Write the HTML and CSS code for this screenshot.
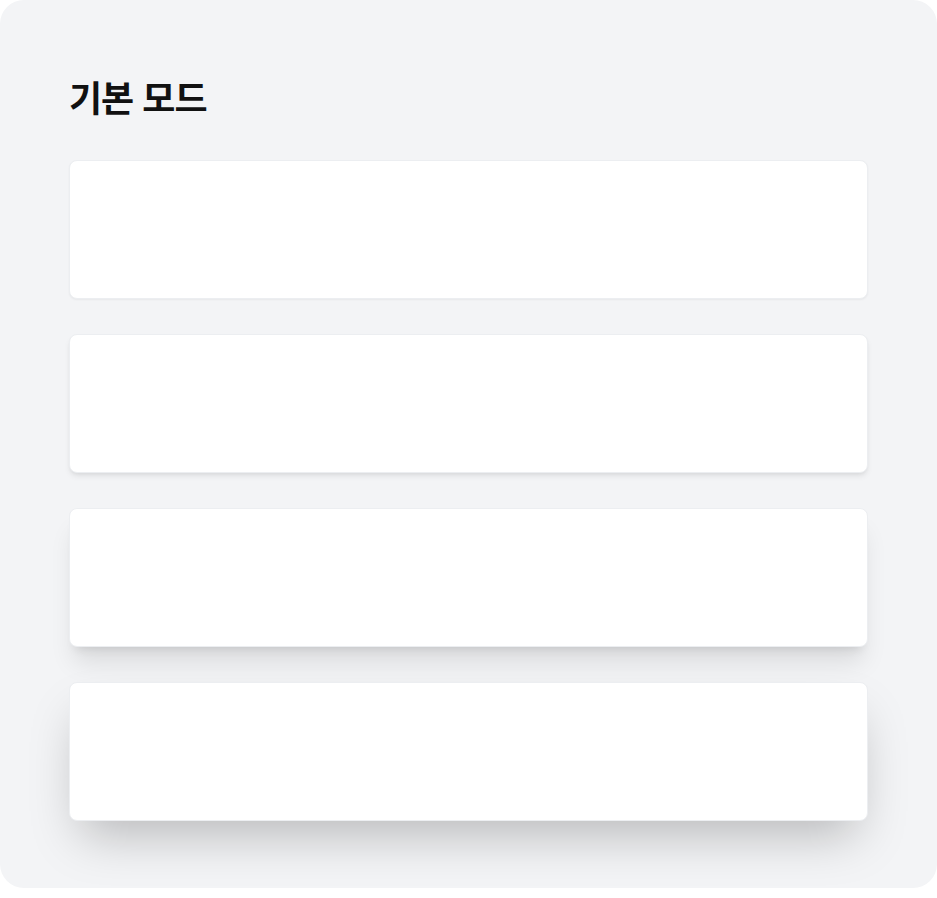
FILE: index.html
```html
<!DOCTYPE html>
<html lang="ko">
<head>
<meta charset="utf-8">
<title>기본 모드</title>
<link rel="stylesheet" href="styles.css">
</head>
<body>
<main class="panel">
  <h1 class="title">기본 모드</h1>
  <div class="cards">
    <div class="card card-sm"></div>
    <div class="card card-md"></div>
    <div class="card card-lg"></div>
    <div class="card card-xl"></div>
  </div>
</main>
</body>
</html>
```

FILE: styles.css
```css
html, body {
  margin: 0;
  padding: 0;
  background: #ffffff;
}

body {
  font-family: "Noto Sans CJK KR", "Noto Sans", sans-serif;
}

.panel {
  box-sizing: border-box;
  width: 937px;
  height: 888px;
  background: #f3f4f6;
  border-radius: 24px;
  padding: 76px 69px 0 69px;
}

.title {
  margin: 0 0 43px 0;
  font-size: 36px;
  line-height: 41px;
  font-weight: 700;
  color: #111111;
  letter-spacing: -1px;
}

.cards {
  display: flex;
  flex-direction: column;
  gap: 35px;
}

.card {
  height: 139px;
  background: #ffffff;
  border-radius: 8px;
  border: 1px solid #eceef1;
  box-sizing: border-box;
}

.card-sm {
  box-shadow: 0 1px 2px 0 rgba(0, 0, 0, 0.05);
}

.card-md {
  box-shadow: 0 4px 6px -1px rgba(0, 0, 0, 0.08), 0 2px 4px -2px rgba(0, 0, 0, 0.08);
}

.card-lg {
  box-shadow: 0 20px 25px -5px rgba(0, 0, 0, 0.1), 0 8px 10px -6px rgba(0, 0, 0, 0.1);
}

.card-xl {
  box-shadow: 0 25px 50px -12px rgba(0, 0, 0, 0.25);
}
```
